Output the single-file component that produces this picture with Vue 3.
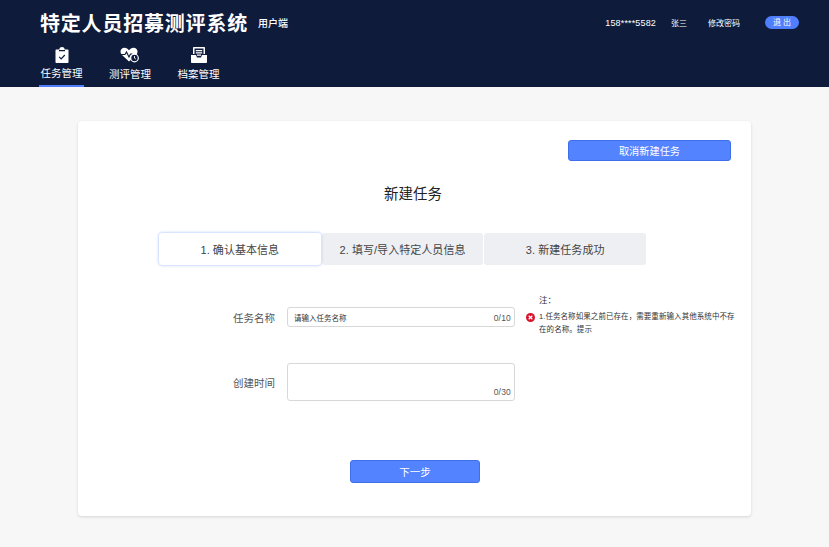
<template>
  <div class="page">
    <header class="header">
      <div class="top">
        <div class="brand">
          <h1>特定人员招募测评系统</h1>
          <span class="client">用户端</span>
        </div>
        <div class="user">
          <span class="phone">158****5582</span>
          <span class="name">张三</span>
          <span class="pwd">修改密码</span>
          <span class="logout">退 出</span>
        </div>
      </div>
      <nav class="nav">
        <a class="nav-item active">
          <svg width="16" height="16" viewBox="0 0 16 16">
            <path fill="#fff" d="M2.500 2.500h3V1.800C5.500 .8 6.600 0 8 0s2.500 .8 2.500 1.800v.7h3c.6 0 1 .4 1 1v11.500c0 .6-.4 1-1 1h-11c-.6 0-1-.4-1-1V3.500c0-.6 .4-1 1-1z" />
            <path fill="none" stroke="#0f1b3a" stroke-width="1.200" d="M5 3.600h6M5.200 9.800l2 2 3.600-3.800" />
          </svg>
          <span>任务管理</span>
        </a>
        <a class="nav-item">
          <svg width="20" height="16" viewBox="0 0 20 16">
            <path fill="#fff" d="M9 14.500 2 8C.2 6.200 0 3.600 1.500 2 3 .4 5.600 .3 7.400 1.800L9 3.200l1.600-1.400c1.800-1.500 4.400-1.400 5.900 .2 1.300 1.400 1.300 3.400 .4 5L9 14.500z" />
            <path fill="none" stroke="#0f1b3a" stroke-width="1.100" d="M1 7.500h4l1.500-2.500L9 10l1.500-3h2" />
            <circle cx="14.500" cy="11" r="3.800" fill="#0f1b3a" stroke="#fff" stroke-width="1.200" />
            <path fill="none" stroke="#fff" stroke-width=".9" d="M14.500 9v2.200l1.300 .8" />
          </svg>
          <span>测评管理</span>
        </a>
        <a class="nav-item">
          <svg width="16" height="16" viewBox="0 0 16 16">
            <path fill="#fff" d="M3 0h10c.6 0 1 .4 1 1v6h-1.500V1.500h-9V7H2V1c0-.6 .4-1 1-1z" />
            <path fill="#fff" d="M4.800 3h6.400v1.200H4.800zM4.800 5.300h6.400v1.200H4.800zM6 7.600h4v1.200H6z" />
            <path fill="#fff" d="M0 8h5l1 2.500h4L11 8h5v7c0 .6-.4 1-1 1H1c-.6 0-1-.4-1-1V8z" />
          </svg>
          <span>档案管理</span>
        </a>
      </nav>
    </header>

    <main class="main">
      <section class="card">
        <div class="card-top">
          <button class="btn cancel">取消新建任务</button>
        </div>
        <h2>新建任务</h2>
        <div class="steps">
          <div v-for="(s, i) in steps" :key="s" class="step" :class="{ current: i === 0 }">{{ s }}</div>
        </div>

        <div class="form">
          <div class="fields">
            <div class="row">
              <label>任务名称</label>
              <div class="input">
                <span class="placeholder">请输入任务名称</span>
                <span class="count">0/10</span>
              </div>
            </div>
            <div class="row second">
              <label>创建时间</label>
              <div class="input area">
                <span class="count">0/30</span>
              </div>
            </div>
          </div>
          <div class="note">
            <p class="note-title">注：</p>
            <div class="note-body">
              <svg width="9" height="9" viewBox="0 0 9 9">
                <circle cx="4.500" cy="4.500" r="4.500" fill="#d8142c" />
                <path stroke="#fff" stroke-width="1.300" d="M2.700 2.700l3.600 3.600M6.300 2.700 2.700 6.300" />
              </svg>
              <p>1.任务名称如果之前已存在，需要重新输入其他系统中不存在的名称。提示</p>
            </div>
          </div>
        </div>

        <div class="foot">
          <button class="btn next">下一步</button>
        </div>
      </section>
    </main>
  </div>
</template>

<script setup>
const steps = ['1. 确认基本信息', '2. 填写/导入特定人员信息', '3. 新建任务成功']
</script>

<style>
html, body {
  margin: 0;
  background: #f7f7f7;
}
</style>

<style scoped>
.page {
  width: 829px;
  height: 547px;
  overflow: hidden;
  font-family: "Liberation Sans", "Noto Sans CJK SC", sans-serif;
  background: #f7f7f7;
}

.header {
  height: 87px;
  box-sizing: border-box;
  background: #0f1b3a;
  color: #fff;
  padding-left: 39px;
}

.top {
  display: flex;
  justify-content: space-between;
  align-items: center;
  height: 45px;
  padding-right: 30px;
}

.brand {
  display: flex;
  align-items: center;
  padding-left: 1px;
}

.brand h1 {
  margin: 0;
  font-size: 20px;
  font-weight: 700;
  letter-spacing: .8px;
}

.client {
  margin-left: 10px;
  font-size: 10px;
  font-weight: 500;
}

.user {
  display: flex;
  align-items: center;
  font-size: 8px;
}

.phone {
  font-size: 9px;
  letter-spacing: .15px;
}

.name {
  margin-left: 15px;
}

.pwd {
  margin-left: 21px;
}

.logout {
  margin-left: 25px;
  width: 34px;
  height: 13px;
  line-height: 13px;
  text-align: center;
  border-radius: 7px;
  background: #4f7fff;
  white-space: pre;
}

.nav {
  display: flex;
  height: 42px;
}

.nav-item {
  display: flex;
  flex-direction: column;
  align-items: center;
  width: 45px;
  margin-right: 23.500px;
  box-sizing: border-box;
  font-size: 10.500px;
  padding-top: 2px;
  gap: 2px;
  height: 42px;
}

.nav-item span {
  white-space: nowrap;
}

.nav-item:nth-child(2),
.nav-item:nth-child(3) {
  gap: 3px;
}

.nav-item.active {
  border-bottom: 2px solid #4f7fff;
}

.main {
  padding: 34px 78px 0;
}

.card {
  height: 395px;
  box-sizing: border-box;
  background: #fff;
  border-radius: 4px;
  box-shadow: 0 1px 3px rgba(0, 0, 0, .14);
  padding: 19px 20px 0 81px;
}

.card-top {
  display: flex;
  justify-content: flex-end;
}

.btn {
  display: block;
  height: 21px;
  padding: 0;
  box-sizing: border-box;
  border: 1px solid #3f6fe8;
  border-radius: 3px;
  background: #5483ff;
  color: #fff;
  font-family: inherit;
  font-size: 10.500px;
}

.cancel {
  width: 163px;
  font-size: 10.200px;
}

h2 {
  margin: 16px 0 0;
  padding-right: 64px;
  text-align: center;
  font-size: 14.500px;
  line-height: 34px;
  font-weight: 400;
  color: #222;
}

.steps {
  display: flex;
  width: 487px;
  height: 32px;
  margin-top: 22px;
  gap: 1px;
}

.step {
  flex: 1;
  display: flex;
  align-items: center;
  justify-content: center;
  background: #eeeff3;
  border-radius: 3px;
  font-size: 11px;
  letter-spacing: .05px;
  color: #444;
}

.step.current {
  position: relative;
  z-index: 1;
  background: #fff;
  box-shadow: 0 0 3px rgba(79, 127, 255, .6);
}

.form {
  display: flex;
  margin-top: 28px;
}

.fields {
  width: 356px;
  margin-left: 74px;
  margin-top: 14px;
}

.row {
  display: flex;
  align-items: center;
}

.row.second {
  margin-top: 36px;
}

label {
  width: 42px;
  margin-right: 12px;
  white-space: nowrap;
  font-size: 10.500px;
  color: #555;
}

.input {
  position: relative;
  display: flex;
  align-items: center;
  width: 228px;
  height: 20px;
  box-sizing: border-box;
  padding-left: 6px;
  border: 1px solid #d8d8d8;
  border-radius: 3px;
  background: #fff;
}

.input.area {
  height: 38px;
}

.placeholder {
  font-size: 7.500px;
  color: #333;
}

.count {
  position: absolute;
  right: 3px;
  bottom: 3px;
  font-size: 8.500px;
  letter-spacing: .2px;
  color: #555;
}

.note {
  width: 212px;
  margin-left: 11px;
  margin-top: 1px;
  font-size: 7.500px;
  color: #333;
}

.note-title {
  margin: 0 0 0 13px;
  line-height: 12px;
  font-size: 8.500px;
}

.note-body {
  display: flex;
  align-items: flex-start;
  gap: 4px;
  margin-top: 5px;
}

.note-body svg {
  flex: none;
  margin-top: 2px;
}

.note-body p {
  margin: 0;
  line-height: 12.500px;
  width: 200px;
  letter-spacing: .07px;
}

.foot {
  display: flex;
  margin-top: 59px;
  margin-left: 191px;
}

.next {
  width: 130px;
  height: 23px;
}
</style>
